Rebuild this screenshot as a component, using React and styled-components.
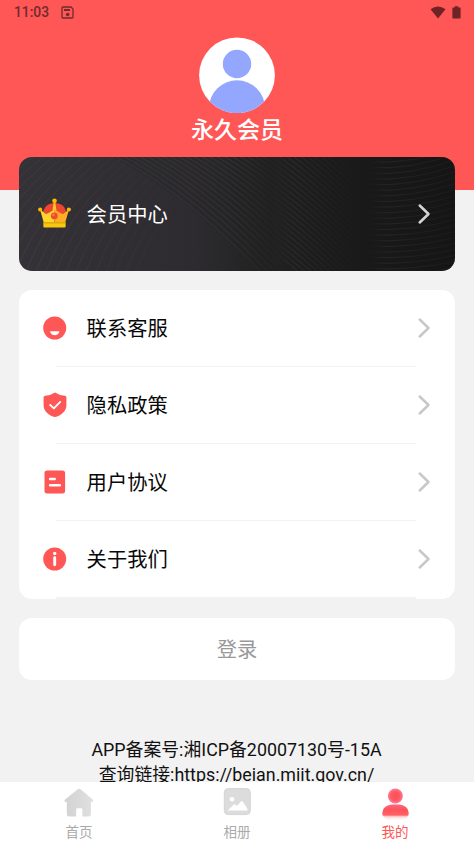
import React from "react";
import styled, { createGlobalStyle } from "styled-components";

const GlobalStyle = createGlobalStyle`
  * {
    box-sizing: border-box;
  }

  body {
    margin: 0;
    background: #f2f2f2;
    font-family: Roboto, "Noto Sans CJK SC", sans-serif;
  }
`;

const Page = styled.div`
  display: flex;
  flex-direction: column;
  width: 100%;
  height: 844px;
  overflow: hidden;
  background: #f2f2f2;
`;

const Header = styled.header`
  flex: none;
  height: 190px;
  background: #ff5656;
`;

const StatusBar = styled.div`
  display: flex;
  align-items: center;
  height: 24px;
  padding: 0 13px 0 14px;
  color: #702b2e;
  font-size: 13.8px;
  font-weight: 500;

  svg {
    flex: none;
  }
`;

const Clock = styled.span`
  width: 47px;
  line-height: 24px;
`;

const StatusIcons = styled.div`
  display: flex;
  align-items: center;
  gap: 6px;
  margin-left: auto;
`;

const Profile = styled.div`
  display: flex;
  flex-direction: column;
  align-items: center;
  padding-top: 13px;

  svg {
    display: block;
  }
`;

const UserName = styled.h1`
  margin: 3px 0 0;
  color: #fff;
  font-size: 23px;
  font-weight: 500;
  line-height: 30px;
`;

const Content = styled.main`
  flex: 1;
  min-height: 0;
  overflow: hidden;
  margin-top: -33px;
  padding: 0 19px;
`;

const MemberCard = styled.section`
  position: relative;
  display: flex;
  align-items: center;
  height: 114px;
  padding: 0 24px 0 19px;
  overflow: hidden;
  border-radius: 13px;
  background: linear-gradient(90deg, #343236 0%, #2d2b2f 40%, #232323 54%, #1b1b1b 72%, #151515 100%);
`;

const Waves = styled.svg`
  position: absolute;
  inset: 0;
`;

const IconSlot = styled.span`
  position: relative;
  display: flex;
  justify-content: center;
  width: 33px;
  margin-right: 15.6px;
`;

const Label = styled.span`
  position: relative;
  flex: 1;
  padding-top: 2px;
  color: ${(props) => props.$color || "#080808"};
  font-size: 20.3px;
  line-height: 30px;
`;

const List = styled.section`
  height: 309px;
  margin-top: 19px;
  overflow: hidden;
  border-radius: 13px;
  background: #fff;
`;

const Row = styled.div`
  display: flex;
  align-items: center;
  height: 76px;
  padding: 0 24px 0 19px;
`;

const Divider = styled.div`
  height: ${(props) => props.$size || 1}px;
  margin: 0 39px 0 37px;
  background: #f2f2f2;
`;

const LoginButton = styled.button`
  display: block;
  width: 100%;
  height: 62px;
  margin-top: 19px;
  padding: 0 0 2px;
  border: 0;
  border-radius: 13px;
  background: #fff;
  color: #999;
  font-family: inherit;
  font-size: 20.3px;
`;

const Record = styled.p`
  margin: 58px 1px 0 0;
  color: #111;
  font-size: 17.85px;
  line-height: 24.5px;
  text-align: center;
`;

const TabBar = styled.nav`
  display: grid;
  flex: none;
  grid-template-columns: repeat(3, 1fr);
  height: 62px;
  background: #fff;
`;

const Tab = styled.div`
  display: flex;
  flex-direction: column;
  align-items: center;
  padding-top: 3px;
  color: ${(props) => (props.$active ? "#ff5656" : "#aaa")};
  font-size: 13.5px;
  line-height: 20px;

  svg {
    margin-bottom: 1px;
  }
`;

const Chevron = ({ color = "#c8c8c8" }) => (
  <svg width="14" height="22" viewBox="0 0 14 22" style={{ position: "relative" }}>
    <path d="M2.7 2.5 11.5 11 2.7 19.5" fill="none" stroke={color} strokeWidth="2.5" strokeLinecap="round" strokeLinejoin="round" />
  </svg>
);

const Avatar = () => (
  <svg width="76" height="76" viewBox="0 0 76 76">
    <defs>
      <clipPath id="avatar">
        <circle cx="38" cy="38.3" r="37.9" />
      </clipPath>
    </defs>
    <circle cx="38" cy="38.3" r="37.9" fill="#fff" />
    <g clipPath="url(#avatar)" fill="#94a7ff">
      <circle cx="38" cy="27" r="14.2" />
      <ellipse cx="38" cy="71.3" rx="28" ry="28" />
    </g>
  </svg>
);

const Crown = () => (
  <svg width="33" height="32" viewBox="0 0 34 32">
    <path d="M5 14C8 6 12 5 17 5s10 1 12 9l-5 8H9z" fill="#ef4630" />
    <path d="m2 11 6 5c2.500-.6 6-2.500 9-5.500v14.500H6z" fill="#ffd52d" />
    <path d="m32 11-6 5c-2.500-.6-6-2.500-9-5.500v14.500h11z" fill="#ffad26" />
    <path d="M16.300 3h1.400l1.300 9h-4z" fill="#ffc526" />
    <path d="M5.500 24.600h23v4.200q0 1-1 1h-21q-1 0-1-1z" fill="#f9c80e" />
    <path d="M6 24.400h22v1.300H6z" fill="#d9a500" />
    <g fill="#ffb800">
      <circle cx="17" cy="2.4" r="2.4" />
      <circle cx="2.2" cy="11.4" r="2.1" />
      <circle cx="31.8" cy="11.4" r="2.1" />
    </g>
    <circle cx="16.8" cy="18" r="3.5" fill="#ee4c2f" />
    <circle cx="15.8" cy="16.9" r="1.2" fill="#ff8060" />
  </svg>
);

const ServiceIcon = () => (
  <svg width="24" height="24" viewBox="0 0 24 24">
    <circle cx="11.7" cy="12" r="11.5" fill="#ff5656" />
    <path d="M7 15.3h9.400c-.5 2.500-2.300 3.900-4.700 3.900s-4.200-1.400-4.700-3.900z" fill="#fff" />
  </svg>
);

const ShieldIcon = () => (
  <svg width="24" height="26" viewBox="0 0 24 26">
    <path d="M12 .6q4.3 3 9.7 3.1 1.7.1 1.7 1.4v8.3c0 5.8-5.2 9.900-11.400 11.700C5.8 23.3.6 19.2.6 13.4V5.1Q.6 3.8 2.3 3.7 7.7 3.6 12 .6z" fill="#ff5656" />
    <path d="m7.2 13 3.7 3.4 6.3-6.5" fill="none" stroke="#fff" strokeWidth="1.9" strokeLinecap="round" strokeLinejoin="round" />
  </svg>
);

const DocumentIcon = () => (
  <svg width="24" height="24" viewBox="0 0 24 24">
    <rect x="1.5" y=".6" width="20.6" height="22.8" rx="2.6" fill="#ff5656" />
    <path d="M7.1 9h4.7M7.1 15.2h9.8" stroke="#fff" strokeWidth="2.4" strokeLinecap="round" />
  </svg>
);

const InfoIcon = () => (
  <svg width="24" height="24" viewBox="0 0 24 24">
    <circle cx="11.7" cy="12" r="11.5" fill="#ff5656" />
    <circle cx="11.7" cy="6.5" r="1.7" fill="#fff" />
    <path d="M11.7 10.8v7" stroke="#fff" strokeWidth="2.9" strokeLinecap="round" />
  </svg>
);

const HomeIcon = () => (
  <svg width="32" height="36" viewBox="0 0 32 36">
    <defs>
      <linearGradient id="home">
        <stop stopColor="#d2d2d2" />
        <stop offset="1" stopColor="#e0e0e0" />
      </linearGradient>
    </defs>
    <path d="M14.8 4.3q1.4-1.1 2.8 0l12 10.2c1.2 1.2.6 2.4-.8 2.400h-.9v12.400q0 2.300-2.300 2.300h-6.200v-7.200q0-1.200-1.200-1.200h-3.800q-1.200 0-1.200 1.200v7.200H6.1q-2.300 0-2.300-2.300V16.900H2.900c-1.400 0-2-1.200-.8-2.400z" fill="url(#home)" />
  </svg>
);

const PhotoIcon = () => (
  <svg width="32" height="36" viewBox="0 0 32 36">
    <rect x="3.3" y="3.6" width="26" height="26" rx="4" fill="#dcdcdc" stroke="#d4d4d4" />
    <circle cx="11" cy="14.2" r="2.3" fill="#fff" />
    <path d="m6.7 25.4 6-5.8q.8-.7 1.6 0l1.6 1.4 4-4.5q.9-.9 1.8 0l4.7 7.2v1.7z" fill="#fff" />
  </svg>
);

const MineIcon = () => (
  <svg width="32" height="36" viewBox="0 0 32 36">
    <defs>
      <radialGradient id="mine">
        <stop stopColor="#ff5050" />
        <stop offset=".6" stopColor="#ff5961" />
        <stop offset="1" stopColor="#ff7c9c" />
      </radialGradient>
      <linearGradient id="body" x1="0" x2="0" y1="0" y2="1">
        <stop stopColor="#ff6680" />
        <stop offset=".45" stopColor="#ff5358" />
        <stop offset=".85" stopColor="#ff6066" />
        <stop offset="1" stopColor="#ff9a9e" />
      </linearGradient>
      <linearGradient id="fade" x1="0" x2="0" y1="0" y2="1">
        <stop stopColor="#ff9ba0" stopOpacity=".7" />
        <stop offset="1" stopColor="#ffc8c8" stopOpacity="0" />
      </linearGradient>
    </defs>
    <path d="M3.5 30h26q-2 5.500-13 5.500T3.500 30z" fill="url(#fade)" />
    <circle cx="16.4" cy="11" r="7.5" fill="url(#mine)" />
    <path d="M3.3 29c0-6 4.5-9.500 10-9.500h6.400c5.500 0 10 3.500 10 9.500q0 2.300-2.300 2.300H5.600Q3.300 31.300 3.300 29z" fill="url(#body)" />
  </svg>
);

const range = (count) => Array.from({ length: count }, (_, i) => i);

const CardWaves = () => (
  <Waves width="436" height="114" viewBox="0 0 436 114" fill="none">
    <defs>
      <linearGradient id="left" gradientUnits="userSpaceOnUse" x1="0" x2="150" y1="0" y2="0">
        <stop stopColor="#48464a" stopOpacity=".5" />
        <stop offset="1" stopColor="#48464a" stopOpacity=".12" />
      </linearGradient>
      <linearGradient id="middle" gradientUnits="userSpaceOnUse" x1="90" x2="275" y1="0" y2="0">
        <stop stopColor="#4a4a4b" stopOpacity=".35" />
        <stop offset=".7" stopColor="#444" stopOpacity=".6" />
        <stop offset="1" stopColor="#333" stopOpacity="0" />
      </linearGradient>
      <linearGradient id="inner" gradientUnits="userSpaceOnUse" x1="255" x2="350" y1="0" y2="0">
        <stop stopColor="#3c3c3c" stopOpacity="0" />
        <stop offset=".2" stopColor="#3c3c3c" stopOpacity=".7" />
        <stop offset="1" stopColor="#2a2a2a" stopOpacity="0" />
      </linearGradient>
      <linearGradient id="right" gradientUnits="userSpaceOnUse" x1="350" x2="436" y1="0" y2="0">
        <stop stopColor="#303030" stopOpacity="0" />
        <stop offset=".2" stopColor="#303030" stopOpacity=".6" />
        <stop offset="1" stopColor="#262626" stopOpacity=".4" />
      </linearGradient>
    </defs>
    <g stroke="url(#left)" strokeWidth=".9">
      {range(22).map((i) => (
        <path key={i} d={`M${-95 + i * 10} 120C${-75 + i * 10} 65 ${-40 + i * 10} 24 ${10 + i * 10} -12`} />
      ))}
    </g>
    <path d="M94 0h160v130Q175 42 94 0z" fill="#202022" opacity=".22" />
    <g stroke="url(#middle)" strokeWidth=".8">
      {range(28).map((i) => (
        <path key={i} d={`M${90 + i * 6} ${-4 - i}Q${170 + i * 6} ${35 - i} ${262 + i * 5} ${136 - i * 2}`} />
      ))}
    </g>
    <g stroke="url(#inner)" strokeWidth=".8">
      {range(34).map((i) => (
        <path key={i} d={`M250 ${-90 + i * 5.5}Q290 ${-65 + i * 5.6} 355 ${-5 + i * 5.8}`} />
      ))}
    </g>
    <g stroke="url(#right)" strokeWidth=".9">
      {range(24).map((i) => (
        <path key={i} d={`M350 ${-6 + i * 5.6}Q395 ${-4 + i * 5.6} 438 ${-22 + i * 6}`} />
      ))}
    </g>
  </Waves>
);

const menu = [
  { label: "联系客服", icon: <ServiceIcon /> },
  { label: "隐私政策", icon: <ShieldIcon /> },
  { label: "用户协议", icon: <DocumentIcon /> },
  { label: "关于我们", icon: <InfoIcon /> },
];

const App = () => {
  return (
    <Page>
      <GlobalStyle />
      <Header>
        <StatusBar>
          <Clock>11:03</Clock>
          <svg width="13" height="13" viewBox="0 0 13 13">
            <path d="M2 1h8l2 2v8q0 1-1 1H2q-1 0-1-1V2q0-1 1-1z" fill="none" stroke="#702b2e" strokeWidth="1.3" />
            <path d="M3 3h6v2H3z" fill="#702b2e" />
            <circle cx="6.7" cy="8.5" r="1.8" fill="#702b2e" />
          </svg>
          <StatusIcons>
            <svg width="16" height="13" viewBox="0 0 16 13">
              <path d="M.5 3.2Q8-2.1 15.5 3.2L8 12.6z" fill="#702326" />
            </svg>
            <svg width="9" height="14" viewBox="0 0 9 14">
              <path d="M2.7 1.2h3.6v1.2H8q.6 0 .6.6v9.8q0 .6-.6.6H1q-.6 0-.6-.6V3q0-.6.6-.6h1.7z" fill="#702326" />
            </svg>
          </StatusIcons>
        </StatusBar>
        <Profile>
          <Avatar />
          <UserName>永久会员</UserName>
        </Profile>
      </Header>
      <Content>
        <MemberCard>
          <CardWaves />
          <IconSlot>
            <Crown />
          </IconSlot>
          <Label $color="#fff">会员中心</Label>
          <Chevron color="#d4d4d4" />
        </MemberCard>
        <List>
          {menu.map((item, i) => (
            <React.Fragment key={item.label}>
              <Row>
                <IconSlot>{item.icon}</IconSlot>
                <Label>{item.label}</Label>
                <Chevron />
              </Row>
              <Divider $size={i === menu.length - 1 ? 2 : 1} />
            </React.Fragment>
          ))}
        </List>
        <LoginButton>登录</LoginButton>
        <Record>
          APP备案号:湘ICP备20007130号-15A
          <br />
          查询链接:https://beian.miit.gov.cn/
        </Record>
      </Content>
      <TabBar>
        <Tab>
          <HomeIcon />
          首页
        </Tab>
        <Tab>
          <PhotoIcon />
          相册
        </Tab>
        <Tab $active>
          <MineIcon />
          我的
        </Tab>
      </TabBar>
    </Page>
  );
};

export default App;
